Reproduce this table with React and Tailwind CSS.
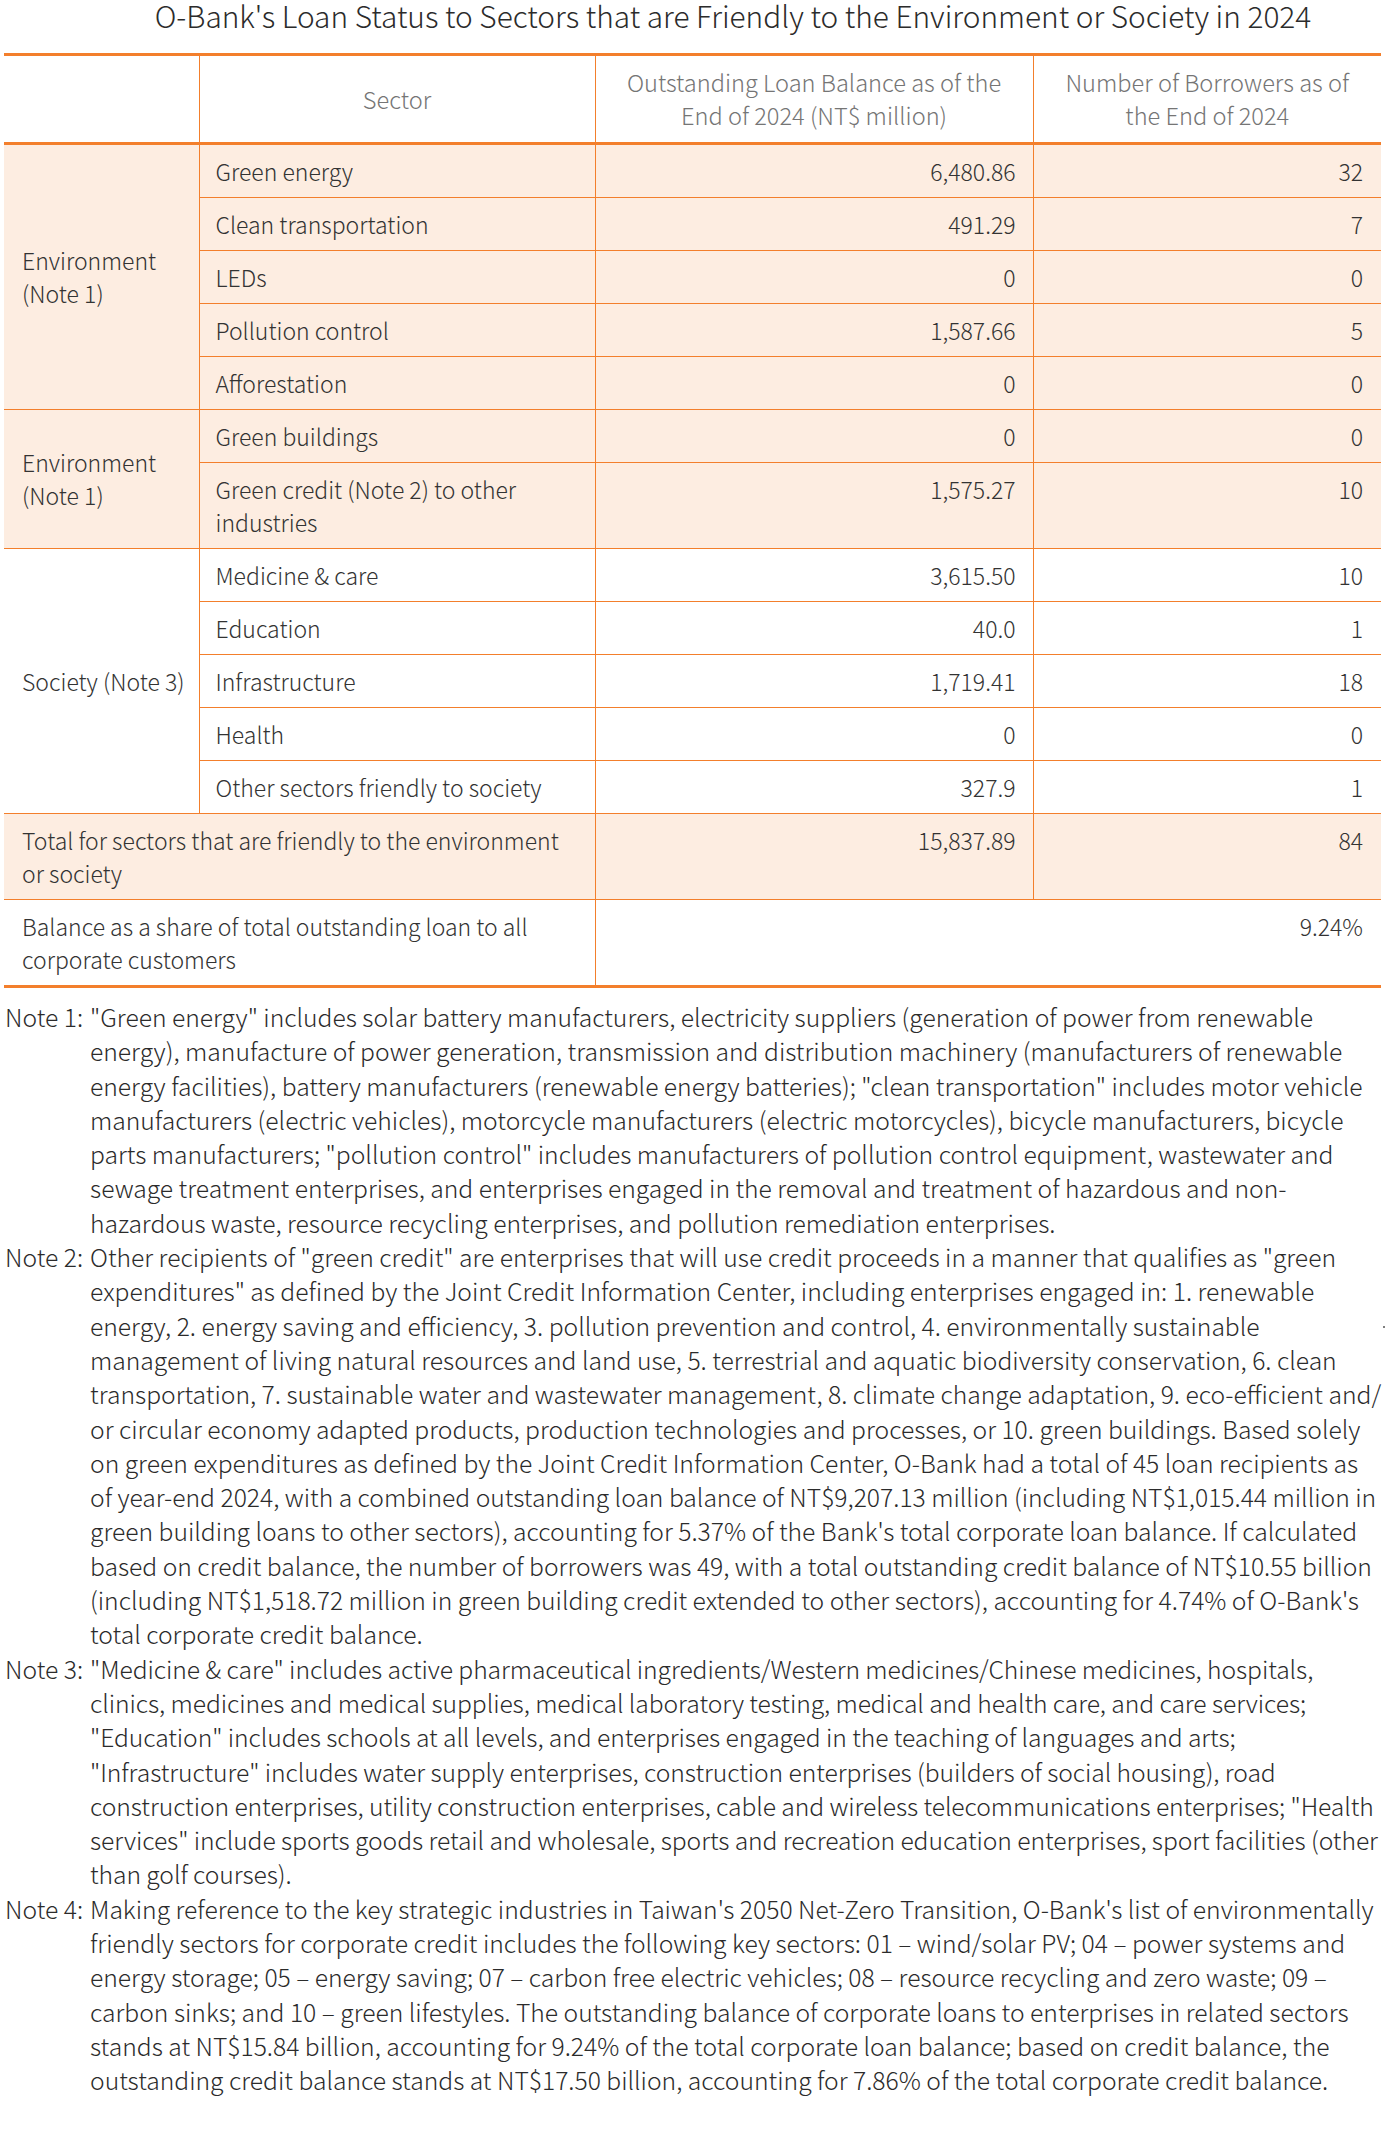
const ORANGE = "border-[#f37f2c]";

const envRows = [
  ["Green energy", "6,480.86", "32"],
  ["Clean transportation", "491.29", "7"],
  ["LEDs", "0", "0"],
  ["Pollution control", "1,587.66", "5"],
  ["Afforestation", "0", "0"],
];

const envRows2 = [
  ["Green buildings", "0", "0"],
  ["Green credit (Note 2) to other industries", "1,575.27", "10"],
];

const socRows = [
  ["Medicine & care", "3,615.50", "10"],
  ["Education", "40.0", "1"],
  ["Infrastructure", "1,719.41", "18"],
  ["Health", "0", "0"],
  ["Other sectors friendly to society", "327.9", "1"],
];

const notes = [
  [
    "Note 1:",
    "\"Green energy\" includes solar battery manufacturers, electricity suppliers (generation of power from renewable energy), manufacture of power generation, transmission and distribution machinery (manufacturers of renewable energy facilities), battery manufacturers (renewable energy batteries); \"clean transportation\" includes motor vehicle manufacturers (electric vehicles), motorcycle manufacturers (electric motorcycles), bicycle manufacturers, bicycle parts manufacturers; \"pollution control\" includes manufacturers of pollution control equipment, wastewater and sewage treatment enterprises, and enterprises engaged in the removal and treatment of hazardous and non-hazardous waste, resource recycling enterprises, and pollution remediation enterprises.",
    "",
  ],
  [
    "Note 2:",
    "Other recipients of \"green credit\" are enterprises that will use credit proceeds in a manner that qualifies as \"green expenditures\" as defined by the Joint Credit Information Center, including enterprises engaged in: 1. renewable energy, 2. energy saving and efficiency, 3. pollution prevention and control, 4. environmentally sustainable management of living natural resources and land use, 5. terrestrial and aquatic biodiversity conservation, 6. clean transportation, 7. sustainable water and wastewater management, 8. climate change adaptation, 9. eco-efficient and/ or circular economy adapted products, production technologies and processes, or 10. green buildings. Based solely on green expenditures as defined by the Joint Credit Information Center, O-Bank had a total of 45 loan recipients as of year-end 2024, with a combined outstanding loan balance of NT$9,207.13 million (including NT$1,015.44 million in green building loans to other sectors), accounting for 5.37% of the Bank's total corporate loan balance. If calculated based on credit balance, the number of borrowers was 49, with a total outstanding credit balance of NT$10.55 billion (including NT$1,518.72 million in green building credit extended to other sectors), accounting for 4.74% of O-Bank's total corporate credit balance.",
    "",
  ],
  [
    "Note 3:",
    "\"Medicine & care\" includes active pharmaceutical ingredients/Western medicines/Chinese medicines, hospitals, clinics, medicines and medical supplies, medical laboratory testing, medical and health care, and care services; \"Education\" includes schools at all levels, and enterprises engaged in the teaching of languages and arts; \"Infrastructure\" includes water supply enterprises, construction enterprises (builders of social housing), road construction enterprises, utility construction enterprises, cable and wireless telecommunications enterprises; \"Health services\" include sports goods retail and wholesale, sports and recreation education enterprises, sport facilities (other than golf courses).",
    "tracking-[-0.07px]",
  ],
  [
    "Note 4:",
    "Making reference to the key strategic industries in Taiwan's 2050 Net-Zero Transition, O-Bank's list of environmentally friendly sectors for corporate credit includes the following key sectors: 01 – wind/solar PV; 04 – power systems and energy storage; 05 – energy saving; 07 – carbon free electric vehicles; 08 – resource recycling and zero waste; 09 – carbon sinks; and 10 – green lifestyles. The outstanding balance of corporate loans to enterprises in related sectors stands at NT$15.84 billion, accounting for 9.24% of the total corporate loan balance; based on credit balance, the outstanding credit balance stands at NT$17.50 billion, accounting for 7.86% of the total corporate credit balance.",
    "",
  ],
];

function DataRow({ row, group, tint }) {
  const [name, amount, count] = row;
  return (
    <tr className={tint ? "bg-[#fdede1]" : "bg-white"}>
      {group}
      <td className={`border-l border-b ${ORANGE} px-[16px] py-[9.5px] align-top`}>{name}</td>
      <td className={`border-l border-b ${ORANGE} px-[17px] py-[9.5px] align-top text-right`}>{amount}</td>
      <td className={`border-l border-b ${ORANGE} px-[18px] py-[9.5px] align-top text-right`}>{count}</td>
    </tr>
  );
}

function GroupCell({ label, span }) {
  return (
    <td rowSpan={span} className={`border-b ${ORANGE} pl-[18px] pr-[6px] align-middle`}>
      {label}
    </td>
  );
}

export default function App() {
  return (
    <div className="w-[1400px] min-h-[2132px] bg-white font-['Noto_Sans_CJK_TC',sans-serif] font-light text-[#333]">
      <h1 className="pl-[66px] text-center text-[29.8px] leading-[30px] font-light text-[#2b2b2b]">
        O-Bank's Loan Status to Sectors that are Friendly to the Environment or Society in 2024
      </h1>

      <div className="mt-[23px] ml-[4px] w-[1377px]">
        <table className={`w-full table-fixed border-collapse border-t-[3px] border-b-[3px] ${ORANGE} text-[23px] leading-[33px]`}>
          <colgroup>
            <col className="w-[195px]" />
            <col className="w-[396px]" />
            <col className="w-[438px]" />
            <col className="w-[348px]" />
          </colgroup>
          <thead>
            <tr className={`border-b-[3px] ${ORANGE} text-[#757575] text-[23.6px]`}>
              <th className="font-light"></th>
              <th className={`border-l ${ORANGE} font-light py-[10px] align-middle`}>Sector</th>
              <th className={`border-l ${ORANGE} font-light px-[16px] py-[10px] align-middle`}>
                Outstanding Loan Balance as of the End of 2024 (NT$ million)
              </th>
              <th className={`border-l ${ORANGE} font-light px-[16px] py-[10px] align-middle`}>
                Number of Borrowers as of the End of 2024
              </th>
            </tr>
          </thead>
          <tbody>
            {envRows.map((row, i) => (
              <DataRow
                key={row[0]}
                row={row}
                tint
                group={i === 0 ? <GroupCell label={<>Environment<br />(Note 1)</>} span={5} /> : null}
              />
            ))}
            {envRows2.map((row, i) => (
              <DataRow
                key={row[0]}
                row={row}
                tint
                group={i === 0 ? <GroupCell label={<>Environment<br />(Note 1)</>} span={2} /> : null}
              />
            ))}
            {socRows.map((row, i) => (
              <DataRow
                key={row[0]}
                row={row}
                group={i === 0 ? <GroupCell label="Society (Note 3)" span={5} /> : null}
              />
            ))}
            <tr className="bg-[#fdede1]">
              <td colSpan={2} className={`border-b ${ORANGE} pl-[18px] pr-[16px] py-[9.5px] align-top`}>
                Total for sectors that are friendly to the environment or society
              </td>
              <td className={`border-l border-b ${ORANGE} px-[17px] py-[9.5px] align-top text-right`}>15,837.89</td>
              <td className={`border-l border-b ${ORANGE} px-[18px] py-[9.5px] align-top text-right`}>84</td>
            </tr>
            <tr className="bg-white">
              <td colSpan={2} className="pl-[18px] pr-[16px] py-[9.5px] align-top">
                Balance as a share of total outstanding loan to all corporate customers
              </td>
              <td colSpan={2} className={`border-l ${ORANGE} px-[18px] py-[9.5px] pb-[18px] align-top text-right`}>
                9.24%
              </td>
            </tr>
          </tbody>
        </table>
      </div>

      <div className="relative mt-[11px] ml-[5px] w-[1380px] text-[24.65px] leading-[34.3px] text-[#2b2b2b]">
        {notes.map(([label, text, extra]) => (
          <div key={label} className="flex">
            <span className="w-[85px] shrink-0">{label}</span>
            <p className={`flex-1 ${extra}`}>{text}</p>
          </div>
        ))}
        <span className="absolute left-[1378px] top-[327px] h-[2px] w-[2px] rounded-full bg-[#555]" />
      </div>
    </div>
  );
}
